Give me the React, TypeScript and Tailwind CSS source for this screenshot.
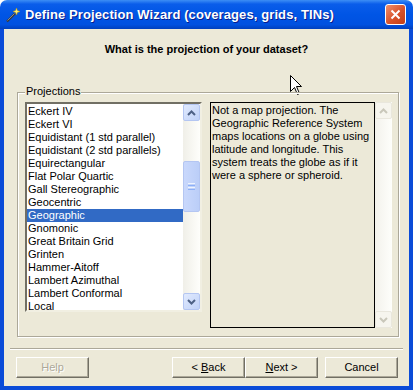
import React from "react";

const PROJECTIONS = [
  "Eckert IV",
  "Eckert VI",
  "Equidistant (1 std parallel)",
  "Equidistant (2 std parallels)",
  "Equirectangular",
  "Flat Polar Quartic",
  "Gall Stereographic",
  "Geocentric",
  "Geographic",
  "Gnomonic",
  "Great Britain Grid",
  "Grinten",
  "Hammer-Aitoff",
  "Lambert Azimuthal",
  "Lambert Conformal",
  "Local",
];

function Chevron({ up, disabled }: { up?: boolean; disabled?: boolean }) {
  return (
    <svg width="9" height="6" viewBox="0 0 9 6">
      <polyline
        points={up ? "1,5 4.5,1.5 8,5" : "1,1 4.5,4.5 8,1"}
        fill="none"
        stroke={disabled ? "#C9C7BA" : "#4D6185"}
        strokeWidth="2"
      />
    </svg>
  );
}

function ScrollButton({ up, disabled }: { up?: boolean; disabled?: boolean }) {
  return (
    <div
      className={
        disabled
          ? "h-[17px] flex items-center justify-center rounded-[2px] border border-[#E9E7DD] bg-[#F6F5EE]"
          : "h-[17px] flex items-center justify-center rounded-[2px] border border-[#B4C6F2] bg-[linear-gradient(to_bottom_right,#E1EAFE,#C0D2F8)]"
      }
    >
      <Chevron up={up} disabled={disabled} />
    </div>
  );
}

function Button({
  children,
  disabled,
  className = "",
}: {
  children: React.ReactNode;
  disabled?: boolean;
  className?: string;
}) {
  return (
    <button
      className={
        "w-[73px] h-[21px] bg-[#ECE9D8] border border-t-white border-l-white border-b-[#716F64] border-r-[#716F64] shadow-[inset_-1px_-1px_0_#ACA899] text-[11px] leading-[13px] " +
        (disabled ? "text-[#ACA899] [text-shadow:1px_1px_0_#fff] " : "text-black ") +
        className
      }
    >
      {children}
    </button>
  );
}

export default function App() {
  return (
    <div className="w-[413px] h-[390px] flex flex-col bg-white font-['Liberation_Sans',Arial,sans-serif] text-black select-none">
      {/* Title bar */}
      <div className="h-[29px] flex items-center rounded-t-[7px] bg-[linear-gradient(to_bottom,#3D8EF5_0%,#0A5DEA_14%,#0055E5_50%,#0051E0_85%,#0040BD_100%)] pl-[5px] pr-[7px]">
        <svg width="16" height="16" viewBox="0 0 16 16">
          <line x1="2" y1="14.5" x2="10" y2="6.5" stroke="#3A3A3A" strokeWidth="2.2" />
          <line x1="2.5" y1="13.5" x2="9.5" y2="6.5" stroke="#9A9A9A" strokeWidth="0.8" />
          <path d="M11.5 1 L12.4 3.6 L15 4.5 L12.4 5.4 L11.5 8 L10.6 5.4 L8 4.5 L10.6 3.6 Z" fill="#FFF27A" stroke="#C79A00" strokeWidth="0.5" />
        </svg>
        <span className="ml-[4px] text-white font-bold text-[13px] tracking-[0.1px] [text-shadow:1px_1px_0_#0A1E8C]">
          Define Projection Wizard (coverages, grids, TINs)
        </span>
        <div className="ml-auto w-[21px] h-[21px] rounded-[3px] border border-white bg-[linear-gradient(to_bottom_right,#F0906E,#D8522A_55%,#C23E16)] flex items-center justify-center">
          <svg width="11" height="11" viewBox="0 0 11 11">
            <path d="M1.5 1.5 L9.5 9.5 M9.5 1.5 L1.5 9.5" stroke="white" strokeWidth="2" />
          </svg>
        </div>
      </div>

      {/* Client area */}
      <div className="relative flex-1 flex flex-col bg-[#ECE9D8] border-x-4 border-b-4 border-[#0A4BD8]">
        <div className="mt-[14px] text-center text-[11px] leading-[13px] font-bold">
          What is the projection of your dataset?
        </div>

        {/* Mouse pointer */}
        <svg className="absolute left-[286px] top-[46px]" width="13" height="21" viewBox="0 0 13 21">
          <path d="M0.5 0.5 L0.5 16.5 L4.5 12.5 L7.5 19.5 L9.5 18.5 L6.5 11.5 L11.5 11.5 Z" fill="white" stroke="black" strokeWidth="1" />
        </svg>

        {/* Group box */}
        <div className="relative mt-[36px] ml-[13px] mr-[10px] h-[245px] border border-[#ACA899] shadow-[1px_1px_0_#fff,inset_1px_1px_0_#fff] pl-[7px] pt-[9px] flex">
          <span className="absolute left-[7px] -top-[8px] bg-[#ECE9D8] px-[1px] text-[11px] leading-[13px]">Projections</span>

          {/* List box */}
          <div className="w-[177px] h-[210px] flex border-2 border-t-[#716F64] border-l-[#716F64] border-b-[#F1EFE2] border-r-[#F1EFE2] bg-white">
            <div className="flex-1 pt-[1px]">
              {PROJECTIONS.map((p) => (
                <div
                  key={p}
                  className={
                    "h-[13px] leading-[13px] text-[11px] pl-[1px] whitespace-nowrap " +
                    (p === "Geographic" ? "bg-[#316AC5] text-white" : "")
                  }
                >
                  {p}
                </div>
              ))}
            </div>
            <div className="w-[17px] flex flex-col bg-[linear-gradient(to_right,#F0EFE8,#FEFEFB)]">
              <ScrollButton up />
              <div className="flex-1 pt-[40px]">
                <div className="h-[51px] rounded-[2px] border border-[#B4C6F2] bg-[linear-gradient(to_right,#C9D8FC,#BBCEF8)] flex flex-col items-center justify-center gap-[1px]">
                  <div className="w-[7px] h-[1px] bg-[#EEF4FE]" />
                  <div className="w-[7px] h-[1px] bg-[#8CB0F8]" />
                  <div className="w-[7px] h-[1px] bg-[#EEF4FE]" />
                  <div className="w-[7px] h-[1px] bg-[#8CB0F8]" />
                </div>
              </div>
              <ScrollButton />
            </div>
          </div>

          {/* Description */}
          <div className="ml-[8px] w-[165px] h-[226px] border border-black text-[11px] leading-[13px] pl-[1px] pt-[1px]">
            Not a map projection. The
            <br />
            Geographic Reference System
            <br />
            maps locations on a globe using
            <br />
            latitude and longitude. This
            <br />
            system treats the globe as if it
            <br />
            were a sphere or spheroid.
          </div>
          <div className="w-[17px] h-[226px] flex flex-col bg-[linear-gradient(to_right,#F3F2EC,#FEFEFB)]">
            <ScrollButton up disabled />
            <div className="flex-1" />
            <ScrollButton disabled />
          </div>
        </div>

        {/* Separator */}
        <div className="mt-[11px] mx-[6px] h-[2px] border-t border-[#ACA899] border-b border-b-white" />

        {/* Buttons */}
        <div className="mt-[7px] flex items-start pl-[12px] pr-[11px]">
          <Button disabled>Help</Button>
          <Button className="ml-auto">
            &lt; <u>B</u>ack
          </Button>
          <Button>
            <u>N</u>ext &gt;
          </Button>
          <Button className="ml-[7px]">Cancel</Button>
        </div>
      </div>
    </div>
  );
}
